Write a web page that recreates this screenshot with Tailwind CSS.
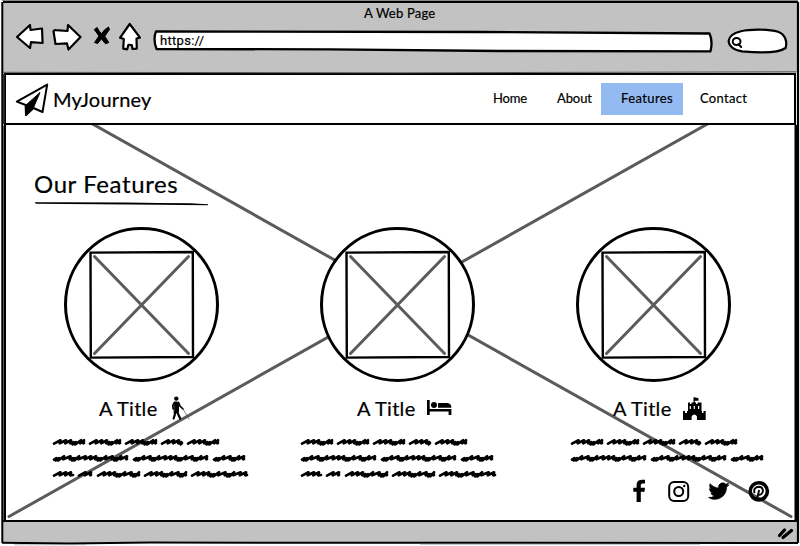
<!DOCTYPE html>
<html lang="en">
<head>
<meta charset="utf-8">
<title>A Web Page</title>
<script src="https://cdn.jsdelivr.net/npm/@tailwindcss/browser@4"></script>
</head>
<body class="bg-white">
<svg class="hidden">
  <symbol id="placeholder" viewBox="0 0 156 156">
    <circle cx="77.5" cy="77.500" r="76" fill="#fff" stroke="#000" stroke-width="3"/>
    <path d="M26.500 25.600L128.800 25L129 130L26.800 130.600Z" fill="#fff" stroke="#000" stroke-width="2.400"/>
    <path d="M30.500 29.500L124.500 126.500M124.500 29.500L30.500 126.500" stroke="#5b5b5b" stroke-width="3" stroke-linecap="round"/>
  </symbol>
</svg>
<div class="relative flex h-[546px] w-[800px] flex-col overflow-hidden bg-white pr-[3px] pl-[3px] font-[Lato,'Noto_Sans',sans-serif] text-black [-webkit-text-stroke:0.2px_black]">
  <header class="h-[73px] shrink-0 bg-[#c2c2c2]">
    <h1 class="h-[27px] pt-[3px] pl-[361px] text-[13px] leading-[20px] whitespace-nowrap"><span class="tracking-[0.2px]">A Web Page</span></h1>
    <div class="flex h-[30px]">
      <svg class="h-[30px] w-[145px] shrink-0" viewBox="3 27 145 30" overflow="visible" fill="#fff" stroke="#000" stroke-width="2.200" stroke-linejoin="round">
        <path d="M17 37L30 25L30.500 30L42 28.500L42.600 43L31 42.200L30 48Z"/>
        <path d="M53.500 31.200Q54 30 56 30.200L67.500 31L68 25L80.500 37L68.500 49.500L67 43.400L55.500 44Z"/>
        <path d="M129.700 24L140 37.600L136.500 38.500L136.800 48.600L132.500 49L131.800 45L128.400 44.800L127.200 49.300L123.200 48.600L123.800 39L120 37.800Z"/>
        <path d="M94.200 29.500L97.200 27.500Q99 32 101.700 33.500Q104.500 29 108.500 27L109.500 29.500L104.800 36.200L108.800 42.500L105.500 43.800L101.500 39L97.500 43.500L94.500 42.500L99 36Z" fill="#000" stroke-width="1"/>
      </svg>
      <div class="relative flex w-[566px] shrink-0 items-center pl-[9px]">
        <svg class="absolute inset-0 h-[30px] w-[566px]" viewBox="148 27 566 30"><path d="M156 31.400L480 32L709.500 33.500Q713 41 710.500 51.300L500 51L330 49.400L156.500 49Q152.800 39 156 31.400Z" fill="#fff" stroke="#000" stroke-width="2.300" stroke-linejoin="round"/></svg>
        <span class="relative ml-[3px] pb-[2px] font-[Roboto,sans-serif] text-[13px] leading-[16px] tracking-[0.300px]">https://</span>
      </div>
      <svg class="h-[30px] w-[80px] shrink-0" viewBox="714 27 80 30" fill="none" stroke="#000" stroke-linecap="round"><path d="M741 31.200C750 29 768 29 778 31.800C785 34.400 787.500 41 785.600 48C779 52.800 760 53 742 51.400C734 50 729 46.500 728.600 41C729 36.500 733 33 741 31.200Z" fill="#fff" stroke-width="2.200"/><ellipse cx="736.600" cy="41.500" rx="3.900" ry="3.500" stroke-width="2"/><path d="M738.500 44.200L741.200 47" stroke-width="2"/></svg>
    </div>
  </header>
  <nav class="mx-[1px] flex h-[52px] shrink-0 items-start border-2 border-black bg-white">
    <svg class="mt-[6px] ml-[8px] h-[38px] w-[36px] shrink-0" viewBox="14 81 36 38" stroke="#000" stroke-width="2" stroke-linejoin="round"><path d="M16.800 101.600L47.200 84.600L42.500 112L33.500 108L26 115L25.600 105Z" fill="#fff"/><path d="M40 92.500L25.500 105.500L26 115.500L33.500 107.500Z" stroke-width="1"/></svg>
    <div class="w-[442px] shrink-0 pt-[11px] pl-[3px] text-[20px] leading-[26px]"><span class="tracking-[0.200px]">MyJourney</span></div>
    <div class="mt-[8px] flex h-[32px] text-[13px] leading-[31px]">
      <a class="w-[64px]"><span class="ml-[1px] tracking-[-0.200px]">Home</span></a>
      <a class="w-[45px]"><span class="ml-[1px] tracking-[-0.100px]">About</span></a>
      <a class="w-[82px] bg-[#94baf2] pl-[20px]"><span class="tracking-[0.400px]">Features</span></a>
      <a class="pl-[17px]"><span class="tracking-[0.300px]">Contact</span></a>
    </div>
  </nav>
  <main class="relative mx-[1px] h-[395px] shrink-0">
    <svg class="absolute inset-0 h-[395px] w-[792px]" viewBox="4 125 792 395"><path d="M9 77L791 516.500M791 77L9 516.500" stroke="#5b5b5b" stroke-width="3" stroke-linecap="round"/></svg>
    <section class="relative flex h-full flex-col">
      <div class="h-[102px] pt-[43px] pl-[30px]">
        <h2 class="text-[24px] leading-[32px] whitespace-nowrap"><span class="tracking-[0.600px]">Our Features</span></h2>
        <svg class="mt-[1px] h-[5px] w-[176px]" viewBox="34 202 176 5"><path d="M34.500 203.200Q120 203 190 204.300L208 205.300V206.300L160 205.800L36 204.800Z"/></svg>
      </div>
      <div class="flex pl-[47px]">
        <article class="w-[256px]">
          <svg class="ml-[13px] h-[156px] w-[156px]"><use href="#placeholder"/></svg>
          <div class="flex h-[44px] pt-[12px] pl-[48px]">
            <h3 class="mt-[-1px] w-[69px] text-[20px] leading-[28px] whitespace-nowrap"><span class="tracking-[0.300px]">A Title</span></h3>
            <svg class="h-[28px] w-[24px]" viewBox="168 395 24 28" fill="none" stroke="#000" stroke-linecap="round"><circle cx="176.300" cy="398.600" r="2.200" fill="#000" stroke="none"/><path d="M174.800 402H177.500L178.500 404.500V411L177.500 413H174.500Z" fill="#000" stroke-width="1"/><path d="M174.500 402.500L172.800 405.500L173.200 409M178.500 402.500L180 406L183 409" stroke-width="1.700"/><path d="M175.200 412L174.700 415L173.600 418.500M177.500 412L178.500 415L180.200 418.500" stroke-width="2.200"/><path d="M183 409L189 419" stroke-width=".700" stroke="#555"/></svg>
          </div>
          <svg class="scribble mt-[8px] ml-[1px] h-[44px] w-[200px]" data-lines="3" fill="none" stroke="#000"></svg>
        </article>
        <article class="w-[256px]">
          <svg class="ml-[13px] h-[156px] w-[156px]"><use href="#placeholder"/></svg>
          <div class="flex h-[44px] pt-[12px] pl-[50px]">
            <h3 class="mt-[-1px] w-[69px] text-[20px] leading-[28px] whitespace-nowrap"><span class="tracking-[0.300px]">A Title</span></h3>
            <svg class="h-[28px] w-[28px]" viewBox="426 395 28 28"><path d="M427 400H429.700V409H451.400V415H448.600V411.500H429.700V415H427Z"/><circle cx="434" cy="405" r="3"/><path d="M438 403H447.500Q451.400 403.500 451.400 407.700H438Z"/></svg>
          </div>
          <svg class="scribble mt-[8px] ml-[-7px] h-[44px] w-[200px]" data-lines="3" fill="none" stroke="#000"></svg>
        </article>
        <article class="w-[222px]">
          <svg class="ml-[13px] h-[156px] w-[156px]"><use href="#placeholder"/></svg>
          <div class="flex h-[44px] pt-[12px] pl-[50px]">
            <h3 class="mt-[-1px] w-[69px] text-[20px] leading-[28px] whitespace-nowrap"><span class="tracking-[0.300px]">A Title</span></h3>
            <svg class="h-[28px] w-[28px]" viewBox="682 395 28 28"><path fill-rule="evenodd" d="M683 411H685V413H687V411H688V402.500H690V404H691.500V402.500H693.500V397.300H694.500L698.500 398.300V400.700H694.800V402.500H696V404H697.500V402.500H701.500V411H702V413H703.500V411H705.700V420H697V416.500Q694.300 412.500 691.600 416.500V420H683ZM689.700 406V409H690.900V406ZM693.700 406V409H694.900V406ZM698 406V409H699.200V406Z"/></svg>
          </div>
          <svg class="scribble mt-[8px] ml-[7px] h-[28px] w-[200px]" data-lines="2" fill="none" stroke="#000"></svg>
        </article>
      </div>
      <footer class="absolute right-[25px] bottom-[17px] flex h-[24px] gap-[16px]">
        <svg class="h-6 w-6" viewBox="627 479 24 24"><path d="M645 483.500V479.700H641.500Q636.600 480 636.600 485V487.700H633.300V491.700H636.600V502H640.800V491.700H644.500L645 487.700H640.800V485Q640.800 483.500 642.500 483.500Z"/></svg>
        <svg class="h-6 w-6" viewBox="667 479 24 24" fill="none" stroke="#000" stroke-width="2"><rect x="669.200" y="482" width="19" height="19" rx="5"/><circle cx="678.700" cy="491.500" r="4.500"/><circle cx="684.200" cy="486" r="1.200" fill="#000" stroke="none"/></svg>
        <svg class="h-6 w-6" viewBox="706.500 479 24 24"><path d="M728.500 484.800c-.8.400-1.600.6-2.400.7.900-.5 1.500-1.300 1.800-2.300-.8.500-1.700.8-2.600 1a4.150 4.150 0 0 0-7.100 3.800c-3.400-.2-6.500-1.800-8.500-4.300-1.100 1.900-.6 4.300 1.200 5.500-.7 0-1.300-.2-1.900-.5 0 2 1.400 3.700 3.300 4.100-.6.200-1.200.2-1.900.1.500 1.600 2 2.800 3.800 2.900a8.300 8.300 0 0 1-6.100 1.700c7.800 4.900 18-.4 18-10.400.9-.6 1.700-1.400 2.400-2.300Z" stroke="#000" stroke-width=".700"/></svg>
        <svg class="h-6 w-6" viewBox="747 479 24 24" fill="none"><circle cx="758.800" cy="491.300" r="8.600" stroke="#000" stroke-width="3.600"/><path d="M754.700 493.200C753 489.500 755.500 486.800 759 486.800C763 487 763.800 491 761.800 493.500C760.500 495.300 758.500 495 757.900 494M759.200 490L756.500 500.500" stroke="#000" stroke-width="1.900"/></svg>
      </footer>
    </section>
  </main>
  <div class="flex h-[23px] shrink-0 justify-end border-t-2 border-black bg-[#c2c2c2]">
    <svg class="mt-[4px] mr-[2px] h-[16px] w-[18px]" viewBox="778 526 18 16" stroke="#000" stroke-width="3.200" stroke-linecap="round"><path d="M780.500 535.500L785.500 530M784 537.500L792.500 530.500"/></svg>
  </div>
  <svg class="pointer-events-none absolute inset-0 h-[546px] w-[800px]" fill="none" stroke="#000">
    <path d="M2 .500H798" stroke="#8a8c8a"/>
    <path d="M3 2L798 2" stroke-width="2"/>
    <path d="M2.300 2V543" stroke-width="2"/>
    <path d="M3 72.300L400 72.800L796 71.800" stroke="#555" stroke-width="1"/>
    <path d="M3.700 74V124" stroke="#2c2e30" stroke-width="2"/>
    <path d="M3.500 126V520" stroke="#555"/>
    <path d="M5 125V520" stroke-width="2"/>
    <path d="M798 2V543" stroke-width="2.200"/>
    <path d="M796 125V520" stroke-width="3"/>
    <path d="M2 542.800L70 543.600L150 542.600L798 543" stroke-width="2" stroke-linejoin="round"/>
    <path d="M14 544.800H86M420 544.300H700" stroke="#8a8a8a" stroke-width=".600"/>
  </svg>
</div>
<script>
// Word extents of the handwritten filler text, one list per line.
const lines = [
  [[2,32],[38,68],[74,104],[110,130],[136,166]],
  [[2,75],[82,155],[162,192]],
  [[2,21],[27,39],[46,87],[93,134],[140,195]]
];
const steps = [6.5, 5.5, 5, 2.4, 2.6, 5, 6.5, 2.4, 2.2, 4];
document.querySelectorAll('.scribble').forEach(svg => {
  let d = '';
  lines.slice(0, +svg.dataset.lines).forEach((words, row) => {
    const y = 7 + row * 16;
    words.forEach(([a, b]) => {
      let x = a, i = row === 1 ? 3 : 0;
      d += `M${a} ${y + 1.6}`;
      while (x < b - 2) {
        const k = steps[i % steps.length];
        const s = Math.min(k, b - x);
        const top = k < 3 ? 0.2 : -1.7;
        const low = k < 3 ? 2.4 : 1.3;
        d += `L${x + s} ${y + top}L${x + s - 0.8} ${y + low}`;
        x += s; i++;
      }
      d += `L${b} ${y + 1}`;
    });
  });
  const p = document.createElementNS('http://www.w3.org/2000/svg', 'path');
  p.setAttribute('d', d);
  p.setAttribute('stroke-width', '2.7');
  p.setAttribute('stroke-linecap', 'round');
  p.setAttribute('stroke-linejoin', 'round');
  svg.appendChild(p);
});
</script>
</body>
</html>
